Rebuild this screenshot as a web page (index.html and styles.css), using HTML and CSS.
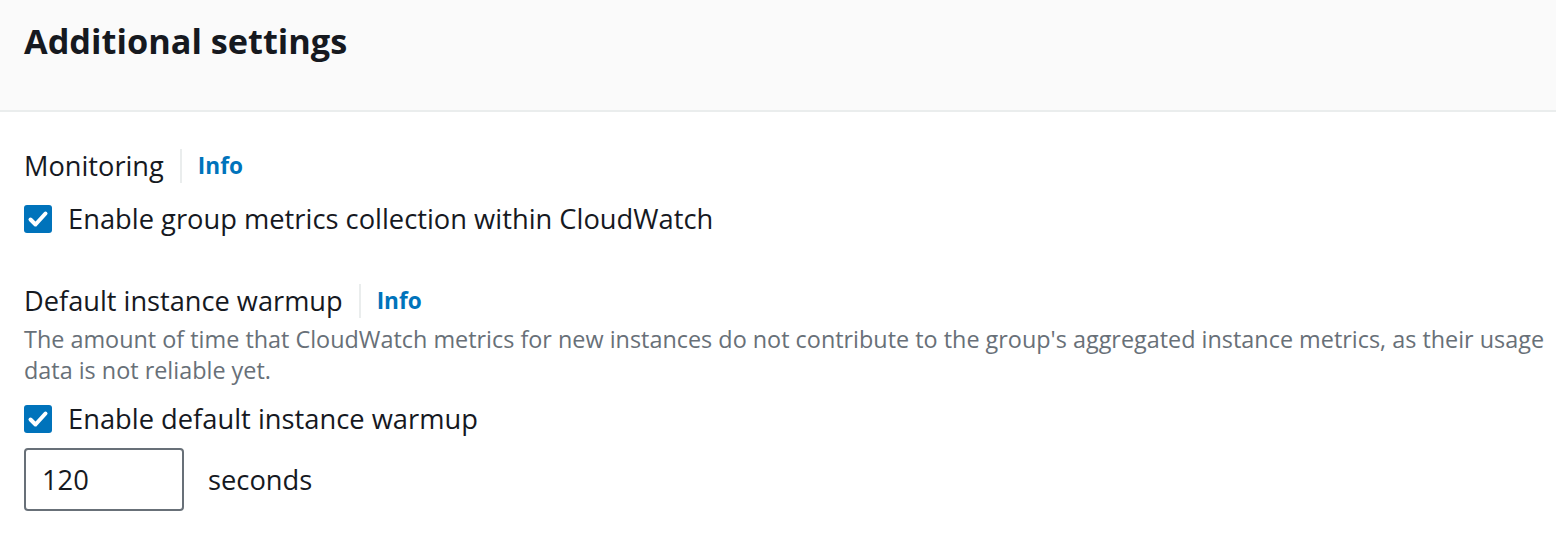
FILE: index.html
```html
<!DOCTYPE html>
<html lang="en">
<head>
<meta charset="utf-8">
<title>Additional settings</title>
<link rel="stylesheet" href="styles.css">
</head>
<body>
<div class="container">
  <div class="header">
    <h2 class="title">Additional settings</h2>
  </div>
  <div class="content">
    <div class="field">
      <div class="label-row">
        <span class="label">Monitoring</span>
        <span class="sep"></span>
        <a class="info" href="#">Info</a>
      </div>
      <label class="check-row">
        <span class="checkbox"><svg viewBox="0 0 28 28" width="28" height="28"><path d="M6.5 14.5 L11.5 19.5 L21.5 8.5" fill="none" stroke="#fff" stroke-width="4" stroke-linecap="round" stroke-linejoin="round"/></svg></span>
        <span class="check-text">Enable group metrics collection within CloudWatch</span>
      </label>
    </div>
    <div class="field second">
      <div class="label-row">
        <span class="label">Default instance warmup</span>
        <span class="sep"></span>
        <a class="info" href="#">Info</a>
      </div>
      <div class="desc">The amount of time that CloudWatch metrics for new instances do not contribute to the group's aggregated instance metrics, as their usage data is not reliable yet.</div>
      <label class="check-row">
        <span class="checkbox"><svg viewBox="0 0 28 28" width="28" height="28"><path d="M6.5 14.5 L11.5 19.5 L21.5 8.5" fill="none" stroke="#fff" stroke-width="4" stroke-linecap="round" stroke-linejoin="round"/></svg></span>
        <span class="check-text">Enable default instance warmup</span>
      </label>
      <div class="input-row">
        <div class="input">120</div>
        <span class="unit">seconds</span>
      </div>
    </div>
  </div>
</div>
</body>
</html>
```
FILE: styles.css
```css
* { box-sizing: border-box; }
html, body { margin: 0; padding: 0; background: #fff; }
body {
  font-family: "Open Sans", "Noto Sans", sans-serif;
  color: #16191f;
  width: 1556px;
  height: 537px;
  overflow: hidden;
}
.header {
  background: #fafafa;
  height: 112px;
  border-bottom: 2px solid #eaeded;
  padding: 19px 24px 0;
}
.title {
  margin: 0;
  font-size: 34.3px;
  line-height: 44px;
  font-weight: 700;
  color: #16191f;
}
.content {
  padding: 34px 8px 0 24px;
}
.field { display: flex; flex-direction: column; }
.field.second { margin-top: 42px; }
.label-row {
  display: flex;
  align-items: center;
  height: 40px;
}
.label { font-size: 27.2px; line-height: 40px; }
.sep {
  width: 2px;
  height: 34px;
  background: #eaeded;
  margin: 0 16px 0 16px;
}
.info {
  font-size: 22.6px;
  font-weight: 700;
  color: #0073bb;
  text-decoration: none;
  line-height: 40px;
}
.desc {
  font-size: 23.4px;
  line-height: 31px;
  color: #687078;
  margin-top: 3px;
}
.check-row {
  display: flex;
  align-items: center;
  gap: 16px;
  height: 40px;
  margin-top: 13px;
}
.checkbox {
  width: 28px;
  height: 28px;
  background: #0073bb;
  border-radius: 3px;
  display: flex;
}
.check-text { font-size: 27.3px; line-height: 40px; }
.input-row {
  display: flex;
  align-items: center;
  gap: 24px;
  margin-top: 9px;
}
.input {
  width: 160px;
  height: 63px;
  border: 2px solid #687078;
  border-radius: 4px;
  padding: 0 16px;
  font-size: 27.3px;
  line-height: 59px;
}
.unit { font-size: 27.3px; }
```
